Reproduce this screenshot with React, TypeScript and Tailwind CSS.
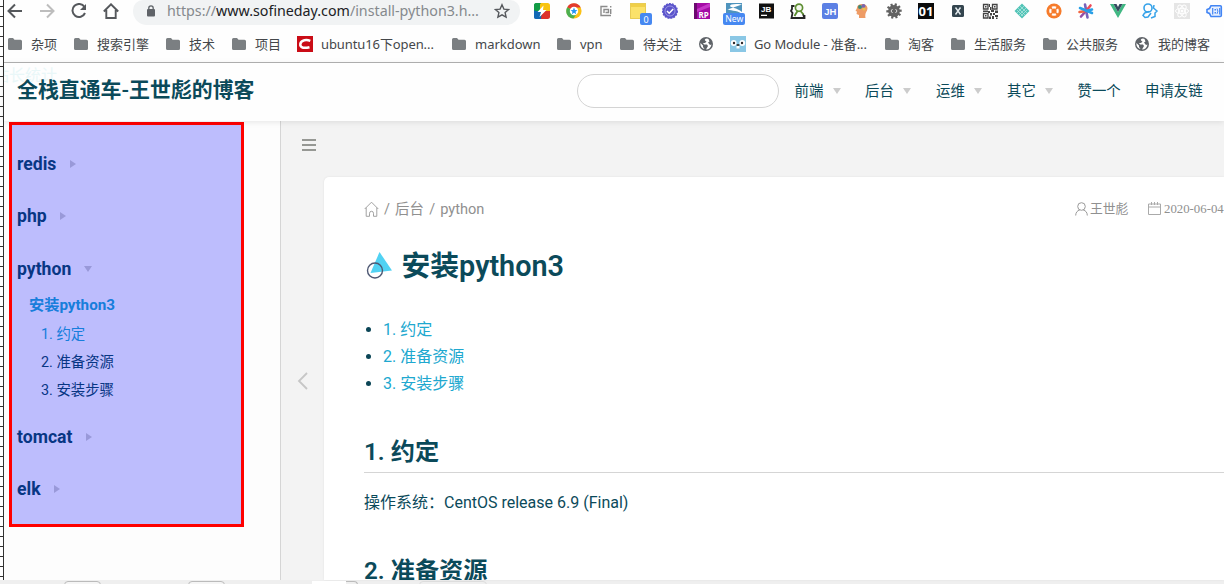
import React from "react";

const teal = "text-[#0b4a5a]";

function Folder() {
  return (
    <svg width="14" height="14" viewBox="0 0 14 14" className="shrink-0">
      <path d="M1.500 1H5l1.500 1.800h6A1.500 1.500 0 0 1 14 4.300v7.200a1.500 1.500 0 0 1-1.500 1.500h-11A1.500 1.500 0 0 1 0 11.500V2.500A1.500 1.500 0 0 1 1.500 1z" fill="#7b7f82" />
    </svg>
  );
}

function Globe() {
  return (
    <svg width="14" height="14" viewBox="0 0 14 14" className="shrink-0">
      <circle cx="7" cy="7" r="7" fill="#5f6368" />
      <path d="M8 1.500c-2 0-2.500 1-2 2l1.500 1L6 6H4l1 1.500h3l1 1.500-2 3.500c3 0 5-2 5.500-5L11 8 9 5.500l1.500-1L9.500 2zM1.500 6l2.500 2.500v1.500l1.500 2C3 11.500 1 9 1.500 6z" fill="#fff" />
    </svg>
  );
}

function CsdnIcon() {
  return (
    <svg width="16" height="16" viewBox="0 0 16 16" className="shrink-0">
      <path d="M0 0h16v16H0z" fill="#ca0c16" />
      <path d="M13.300 4.800C10 3.500 4 3.500 3.300 8c-.5 4.500 5 4.300 9.200 3.200" fill="none" stroke="#fff" strokeWidth="2.500" />
    </svg>
  );
}

function GopherIcon() {
  return (
    <svg width="16" height="16" viewBox="0 0 16 16" className="shrink-0">
      <path d="M0 0h16v16H0z" fill="#8ac7e5" />
      <circle cx="3.700" cy="7" r="2.900" fill="#fff" />
      <circle cx="12.300" cy="7" r="2.900" fill="#fff" />
      <circle cx="4" cy="7" r="1.200" fill="#30292a" />
      <circle cx="12" cy="7" r="1.200" fill="#30292a" />
      <ellipse cx="8" cy="9" rx="1.600" ry="1" fill="#383838" />
      <path d="M6.500 10h3v2.500h-3z" fill="#fff" />
    </svg>
  );
}

const bookmarks: { w: string; icon: React.ReactNode; label?: string; tight?: boolean }[] = [
  { w: "w-[66px]", icon: <Folder />, label: "杂项" },
  { w: "w-[92px]", icon: <Folder />, label: "搜索引擎" },
  { w: "w-[66px]", icon: <Folder />, label: "技术" },
  { w: "w-[65px]", icon: <Folder />, label: "项目" },
  { w: "w-[155px]", icon: <CsdnIcon />, label: "ubuntu16下open...", tight: true },
  { w: "w-[105px]", icon: <Folder />, label: "markdown" },
  { w: "w-[63px]", icon: <Folder />, label: "vpn" },
  { w: "w-[79px]", icon: <Folder />, label: "待关注" },
  { w: "w-[31px]", icon: <Globe /> },
  { w: "w-[155px]", icon: <GopherIcon />, label: "Go Module - 准备...", tight: true },
  { w: "w-[66px]", icon: <Folder />, label: "淘客" },
  { w: "w-[92px]", icon: <Folder />, label: "生活服务" },
  { w: "w-[92px]", icon: <Folder />, label: "公共服务" },
  { w: "w-[89px]", icon: <Globe />, label: "我的博客" },
];

function Ext({ children }: { children: React.ReactNode }) {
  return (
    <svg width="16" height="16" viewBox="0 0 16 16" className="shrink-0 overflow-visible">
      {children}
    </svg>
  );
}

const teeth = [0, 36, 72, 108, 144];

function Extensions() {
  return (
    <div className="flex gap-4">
      <Ext>
        <clipPath id="r"><rect width="16" height="16" rx="2.500" /></clipPath>
        <g clipPath="url(#r)">
          <path d="M0 0h9v8H0z" fill="#119b45" /><path d="M6 0h10v8H6z" fill="#f8c410" />
          <path d="M0 8h8v8H0z" fill="#1268b5" /><path d="M8 8h8v8H7z" fill="#dc3029" />
          <path d="M0 5 5 16H0z" fill="#1268b5" /><path d="M0 0h7L0 8z" fill="#119b45" />
        </g>
        <path d="M9.500 2.500 3.500 9H7l-1.500 5L12.500 7H9z" fill="#fff" />
      </Ext>
      <Ext>
        <circle cx="8" cy="8" r="7.600" fill="#fbc116" />
        <path d="M8 8 1.200 4.200A7.600 7.600 0 0 1 14.800 4.500H8z" fill="#e33b2e" />
        <path d="M8 8 1.200 4.200A7.600 7.600 0 0 0 7.500 15.600L11 10z" fill="#4caf50" />
        <circle cx="8" cy="8" r="4.200" fill="#fff" />
        <path d="m8 4.500 1 2.500 2.500.2-2 1.600.7 2.500L8 9.800l-2.200 1.500.7-2.500-2-1.600L7 7z" fill="#2196f3" />
      </Ext>
      <Ext>
        <path d="M9.500 3.500H3v9h10M6 10V6.500h4.500v3H7.500M12.700 3v1.500M12.700 6v5" fill="none" stroke="#8b8b8b" strokeWidth="1.400" />
      </Ext>
      <Ext>
        <path d="M0 0h16v16H0z" fill="#fbe26a" /><path d="M0 0h16v4H0z" fill="#f0cf48" />
        <path d="M.5 .5h15v15H.5z" fill="none" stroke="#e8cc55" />
        <rect x="10" y="10" width="12" height="12" rx="2" fill="#4688f1" />
        <text x="13.500" y="19.500" fontSize="9" fill="#fff" fontFamily="Noto Sans">0</text>
      </Ext>
      <Ext>
        <circle cx="8" cy="8" r="7.300" fill="#5b54cb" stroke="#5b54cb" strokeDasharray="2 1" strokeWidth="1.400" />
        <circle cx="8" cy="8" r="5" fill="none" stroke="#aaa6e8" strokeWidth=".8" />
        <path d="m5 8 2.200 2.200L11.200 6" fill="none" stroke="#fff" strokeWidth="1.500" />
      </Ext>
      <Ext>
        <path d="M0 0h16v16H0z" fill="#a40ba5" /><path d="M0 0h3v16H0z" fill="#6b096f" /><path d="M3 6 16 0v4L3 9z" fill="#c536c8" />
        <text x="4.500" y="14.500" fontSize="8" fontWeight="700" fill="#fff" fontFamily="Noto Sans">RP</text>
      </Ext>
      <Ext>
        <path d="M0 0h16v12H0z" fill="#4f94bd" /><path d="M16 1.500C8 .500 4 1.500 4 3s7 1.500 12 6v3H0V7z" fill="#fff" />
        <path d="M0 5c4 4 10 1 16 6H0z" fill="#4f94bd" />
        <rect x="-3" y="10" width="22" height="12" rx="2" fill="#4688f1" />
        <text x="-.8" y="19.200" fontSize="8.700" fill="#fff" fontFamily="Noto Sans">New</text>
      </Ext>
      <Ext>
        <path d="M1 .5h15v15H1z" fill="#111" />
        <text x="3" y="9" fontSize="8" fontWeight="700" fill="#fff" fontFamily="Liberation Sans">JB</text>
        <path d="M3 11.700h6v1.300H3z" fill="#fff" />
      </Ext>
      <Ext>
        <path d="M4.500 3H2v3L1 8l1.500 2-1 5H13l1-1-1-3" fill="none" stroke="#252525" strokeWidth="1.800" />
        <path d="M5 15h9.500v-3" fill="none" stroke="#252525" strokeWidth="1.800" />
        <circle cx="9" cy="4.700" r="3.600" fill="#f4f8ee" stroke="#5d8e32" strokeWidth="1.700" /><path d="M7.500 8 4.500 13M10.500 8l3 3.500" stroke="#5d8e32" strokeWidth="1.900" />
      </Ext>
      <Ext>
        <rect width="16" height="16" rx="2" fill="#5c80e4" />
        <text x="2.200" y="11.700" fontSize="9.500" fontWeight="700" fill="#fff" fontFamily="Liberation Sans">JH</text>
      </Ext>
      <Ext>
        <path d="M5 15v-3L2.500 11 3 8.500 1.500 8 3 5C3 0 13-.5 13.500 5c0 4-3 4-2 10z" fill="#ee9c66" />
        <circle cx="6" cy="4" r="2" fill="#398b76" /><circle cx="9.500" cy="3" r="2" fill="#7865b1" /><circle cx="10" cy="6" r="1.500" fill="#e8c347" />
      </Ext>
      <Ext>
        {teeth.map((a) => <path key={a} d="M6.900 .3h2.200v15.400H6.900z" fill="#626262" transform={`rotate(${a + 15} 8 8)`} />)}
        <circle cx="8" cy="8" r="5.900" fill="#626262" /><path d="M6.500 6 5 8l1.500 2M9.500 6 11 8l-1.500 2" fill="none" stroke="#ddd" />
      </Ext>
      <Ext>
        <path d="M0 0h16v16H0z" fill="#0b0b0b" />
        <text x=".5" y="12.500" fontSize="13" fontWeight="700" fill="#fff" fontFamily="Noto Sans">01</text>
      </Ext>
      <Ext>
        <rect x="2" y="2" width="12" height="12" rx="1.500" fill="#34454f" />
        <path d="m5.500 4.500 5 7M10.500 4.500l-5 7" stroke="#e6edf0" strokeWidth="1.400" />
      </Ext>
      <Ext>
        <path d="M1.500 1.500H6V6H1.500zM10.500 1.500H15V6h-4.500zM1.500 10.500H6V15H1.500z" fill="none" stroke="#444" strokeWidth="1.300" />
        <path d="M3 3h1.500v1.500H3zM12 3h1.500v1.500H12zM3 12h1.500v1.500H3zM7 1h1v3H7zM8 4h1.500v3H8zM1 7.500h5v1.500H1zM6 8h2v2H6zM9 7h3v2H9zM13 7.500h3V10h-3zM8 10h2v2.500H8zM11 10h2v2h-2zM13 12h3v2h-3zM10 13h2v3h-2zM7 13.500h2V16H7zM14 14.500h1.500V16H14z" fill="#444" />
      </Ext>
      <Ext>
        <path d="m8 .5 7.500 7.500L8 15.500.5 8z" fill="#51c3b7" />
        <path d="m4 5 7 7M6 3l7 7M3 7l6 6M12 5l-7 7M10 3 3 10M13 7l-6 6" stroke="#b9e9e3" strokeWidth=".7" />
      </Ext>
      <Ext>
        <circle cx="8" cy="8" r="7.600" fill="#f67b2b" />
        <circle cx="8" cy="8" r="3.700" fill="none" stroke="#fff" strokeWidth="2.200" />
        <path d="m4 4 2 2M12 4l-2 2M4 12l2-2M12 12l-2-2" stroke="#f67b2b" strokeWidth="1.800" />
      </Ext>
      <Ext>
        <g strokeWidth="2.600" strokeLinecap="round">
          <path d="M7 1.500 9.500 14.500" stroke="#7862ba" /><path d="m12.500 2.500-4.500 5.500" stroke="#ef4b59" /><path d="m8 8-5 5.500" stroke="#944da7" /><path d="M8 8 1.500 9" stroke="#f16642" /><path d="m8 8 6-1.500M2 5l12 5" stroke="#289fe6" />
        </g>
      </Ext>
      <Ext>
        <path d="M0 1h3.500L8 9l4.500-8H16L8 15z" fill="#41b883" /><path d="M3.500 1h3L8 4l1.500-3h3L8 9z" fill="#35495e" />
      </Ext>
      <Ext>
        <circle cx="6" cy="5" r="4" fill="none" stroke="#36a2e9" strokeWidth="1.600" />
        <path d="M7 8.500 2.500 10l-1.500 2.500 2 2 3-.5 3-4M12 2l-.5 3 3.500 3-2 2v3.500L9 15" fill="none" stroke="#36a2e9" strokeWidth="1.500" />
      </Ext>
      <Ext>
        <path d="M0 0h16v16H0z" fill="#e5e5e5" />
        <g fill="none" stroke="#fff"><ellipse cx="8" cy="8" rx="6.500" ry="2.700" /><ellipse cx="8" cy="8" rx="6.500" ry="2.700" transform="rotate(60 8 8)" /><ellipse cx="8" cy="8" rx="6.500" ry="2.700" transform="rotate(120 8 8)" /></g>
        <circle cx="8" cy="8" r="1.500" fill="#fff" />
      </Ext>
      <Ext>
        <path d="M5 2.700h9.300a1 1 0 0 1 1 1v8.800a1 1 0 0 1-1 1H5L3.500 10.500 1 9.500v-3l2.500-1z" fill="#e8f0fe" stroke="#4285f4" strokeWidth="1.600" />
        <path d="M6.700 5v6.500M13.700 5v6.500" stroke="#4285f4" strokeWidth="1.200" /><path d="M8.500 6H10v1.500H8.500zM8.500 9H10v1.500H8.500z" fill="#4285f4" /><path d="M11 5.500q1.800 2.700 0 5.400" fill="none" stroke="#4285f4" />
      </Ext>
    </div>
  );
}

function BrowserBar() {
  return (
    <div className="relative h-[63px] shrink-0 overflow-hidden border-b border-[#b3b3b3] bg-[#fefefe] font-['Noto_Sans','Noto_Sans_CJK_SC',sans-serif] text-[#44474a]">
      <div className="flex h-[25px] items-start">
        <div className="flex w-[129px] shrink-0 gap-[16px] pl-[3px] pt-[3px]">
          {["#55585c", "#bdbdbd"].map((c, i) => (
            <svg key={c} width="16" height="16" viewBox="0 0 16 16" fill="none" stroke={c} strokeWidth="2">
              <path d={i ? "M1 8h13M8 1.500 14.500 8 8 14.500" : "M15 8H2M8 1.500 1.500 8 8 14.500"} />
            </svg>
          ))}
          <svg width="16" height="16" viewBox="0 0 16 16">
            <path d="M13.500 4A6.500 6.500 0 1 0 14 10" fill="none" stroke="#55585c" strokeWidth="2" /><path d="M15 1v6H9z" fill="#55585c" />
          </svg>
          <svg width="16" height="16" viewBox="0 0 16 16">
            <path d="M.8 8.500 8 1.300l7.200 7.200M3.300 7v8h9.400V7" fill="none" stroke="#55585c" strokeWidth="1.900" />
          </svg>
        </div>
        <div className="flex h-[25px] w-[387px] shrink-0 items-start rounded-b-[14px] rounded-t-[10px] bg-[#f1f3f4] pl-[14px]">
          <svg width="8" height="12" viewBox="0 0 8 12" className="mt-[5px] shrink-0">
            <path d="M1.800 5V3a2.200 2.200 0 0 1 4.400 0v2" fill="none" stroke="#5f6368" strokeWidth="1.300" /><rect y="4" width="8" height="7.500" rx="1" fill="#5f6368" />
          </svg>
          <div className="ml-3 w-[327px] whitespace-nowrap text-[14.260px] leading-[22px] text-[#85898d]">
            https://<span className="text-[#202124]">www.sofineday.com</span>/install-python3.h...
          </div>
          <svg width="16" height="16" viewBox="0 0 16 16" className="mt-[3px] shrink-0">
            <path d="m8 1.800 1.900 4.300 4.700.4-3.500 3.100 1 4.600L8 11.800l-4.100 2.400 1-4.600L1.400 6.500l4.700-.4z" fill="none" stroke="#55585c" strokeWidth="1.400" />
          </svg>
        </div>
        <div className="pl-[14px] pt-[3px]"><Extensions /></div>
      </div>
      <div className="flex h-[38px] items-center pl-1">
        {bookmarks.map((b, i) => (
          <div key={i} className={`flex shrink-0 items-center whitespace-nowrap text-[13px] leading-5 ${b.w}`}>
            <span className="flex w-[23px] shrink-0">{b.icon}</span>
            {b.label && <span className={b.tight ? "pl-px tracking-[-0.1px]" : ""}>{b.label}</span>}
          </div>
        ))}
      </div>
    </div>
  );
}

function Down() {
  return <span className="border-x-4 border-t-[6px] border-x-transparent border-t-[#ccc]" />;
}

function SiteHeader() {
  const items = [
    { t: "前端", w: "w-[70.500px]", sub: true },
    { t: "后台", w: "w-[71px]", sub: true },
    { t: "运维", w: "w-[71px]", sub: true },
    { t: "其它", w: "w-[70.500px]", sub: true },
    { t: "赞一个", w: "w-[67.500px]", sub: false },
    { t: "申请友链", w: "w-[79px]", sub: false },
  ];
  return (
    <header className={`relative z-10 flex h-[58px] shrink-0 items-center bg-[#fefefe] shadow-[0_1px_6px_rgba(0,0,0,0.1)] ${teal}`}>
      <div className="absolute left-0 top-[3px] w-16 overflow-hidden text-[16px] leading-5 text-[#e9f7f8]"><span className="-ml-[11px]">站长统计</span></div>
      <h1 className="relative mb-[3px] ml-[13px] w-[560px] shrink-0 text-[20.900px] font-semibold">全栈直通车-王世彪的博客</h1>
      <div className="mb-0.5 h-[34px] w-[202px] shrink-0 rounded-full border border-[#d4d4d4] bg-white" />
      <nav className="mb-px ml-[15.500px] flex text-[14.4px]">
        {items.map((n) => (
          <div key={n.t} className={`flex shrink-0 items-center gap-[9.500px] whitespace-nowrap ${n.w}`}>
            {n.t}
            {n.sub && <Down />}
          </div>
        ))}
      </nav>
    </header>
  );
}

function Group({ name, open, gap }: { name: string; open?: boolean; gap: string }) {
  return (
    <div className={`flex h-6 items-center text-[17.6px] font-bold leading-6 ${gap}`}>
      {name}
      {open ? (
        <span className="ml-[13px] border-x-4 border-t-[6px] border-x-transparent border-t-[#ccc]" />
      ) : (
        <span className="ml-[13.400px] border-y-4 border-l-[6px] border-y-transparent border-l-[#ccc]" />
      )}
    </div>
  );
}

function Sidebar() {
  return (
    <aside className={`relative w-[277px] shrink-0 border-r border-[#d5d5d5] bg-[#fdfdfd] pl-[13px] ${teal}`}>
      <Group name="redis" gap="mt-[31px]" />
      <Group name="php" gap="mt-[28px]" />
      <Group name="python" open gap="mt-[29px]" />
      <div className="ml-[12px] mt-[12px] text-[15.2px] font-bold leading-6 text-[#20a8cf]">安装python3</div>
      <ul className="ml-6 mt-[4px] text-[14.4px] leading-7">
        <li className="text-[#20a8cf]">1. 约定</li>
        <li>2. 准备资源</li>
        <li>3. 安装步骤</li>
      </ul>
      <Group name="tomcat" gap="mt-[20px]" />
      <Group name="elk" gap="mt-[28px]" />
      <div className="absolute left-[5px] top-px h-[405px] w-[235px] border-[3px] border-[#ff0000] bg-[#0000ff]/25" />
    </aside>
  );
}

function Article() {
  return (
    <main className="flex min-w-0 flex-1 bg-[#f3f3f3]">
      <div className="flex w-[43px] shrink-0 flex-col">
        <div className="ml-[21px] mt-[18px] flex flex-col gap-[3px]">
          <i className="h-0.5 w-[14px] bg-[#969894]" /><i className="h-0.5 w-[14px] bg-[#969894]" /><i className="h-0.5 w-[14px] bg-[#969894]" />
        </div>
        <svg width="11" height="18" viewBox="0 0 11 18" className="ml-[16px] mt-[221px]">
          <path d="M10 1 2 9l8 8" fill="none" stroke="#c6c6c6" strokeWidth="1.800" />
        </svg>
      </div>
      <article className={`mt-[56px] min-w-0 flex-1 overflow-hidden rounded-tl-[5px] bg-white pl-10 shadow-[0_0_2px_#ddd] ${teal}`}>
        <div className="mt-[20px] flex h-6 items-center whitespace-nowrap text-[14.4px] text-[#909090]">
          <svg width="15" height="16" viewBox="0 0 15 16" className="mr-[5px]">
            <path d="M.7 8 7.500 1.200 14.300 8M2.200 6.700v8.600h3.300v-3a2 2 0 0 1 4 0v3h3.300V6.700" fill="none" stroke="#999" strokeWidth=".9" />
          </svg>
          <div className="flex pt-0.5">
            <span className="w-[11px]">/</span><span className="w-[34.200px]">后台</span><span className="w-[11px]">/</span><span className="text-[14.600px]">python</span>
          </div>
          <svg width="13" height="14" viewBox="0 0 13 14" className="ml-auto mr-[2px]">
            <circle cx="6.500" cy="4.500" r="3.800" fill="none" stroke="#999" /><path d="M.7 13.500c0-3 1.600-5 4-5.400M12.300 13.500c0-3-1.600-5-4-5.400" fill="none" stroke="#999" />
          </svg>
          <span className="w-[58px] text-[12.800px]">王世彪</span>
          <svg width="13" height="13" viewBox="0 0 13 13" className="mb-0.5 mr-[3px]">
            <path d="M.5 2h12v10.500H.5zM.5 5h12" fill="none" stroke="#aaa" /><path d="M3.500 0v3M6.500 0v3M9.500 0v3" stroke="#aaa" />
          </svg>
          <span className="w-[60px] pt-px font-['Liberation_Serif',serif] text-[12.800px]">2020-06-04</span>
        </div>
        <h2 className="mt-[24px] flex h-10 items-center text-[28.800px] font-semibold">
          <svg width="37" height="30" viewBox="0 0 37 30" className="shrink-0">
            <path d="M15.500 2 28 20.500 6.500 23z" fill="#51d2f3" /><circle cx="11" cy="20.500" r="7.500" fill="none" stroke="#4e5873" strokeWidth="1.400" />
          </svg>
          <span className="pl-[.5px] pt-1">安装python3</span>
        </h2>
        <ul className="mt-[31px] text-base leading-[27.200px] text-[#20a8cf]">
          {["1. 约定", "2. 准备资源", "3. 安装步骤"].map((t) => (
            <li key={t} className="flex items-center">
              <i className="mb-px ml-0.5 mr-[12px] h-[5px] w-[5px] rounded-full bg-[#0b4556]" />{t}
            </li>
          ))}
        </ul>
        <h3 className="mt-[39px] h-[36px] border-b border-[#d5d5d5] text-[24.200px] font-semibold leading-[30px]">1. 约定</h3>
        <p className="mt-[16px] text-base leading-7">操作系统：CentOS release 6.9 (Final)</p>
        <h3 className="mt-[39px] whitespace-nowrap text-[24.200px] font-semibold leading-[30px]">2. 准备资源</h3>
      </article>
    </main>
  );
}

export default function App() {
  return (
    <div className="flex h-[584px] w-[1224px] flex-col overflow-hidden bg-[#efefef] font-['Roboto','Noto_Sans_CJK_SC',sans-serif]">
      <div className="flex h-[580px] shrink-0">
        <div className="w-1 shrink-0 border-r border-[#333] bg-[repeating-linear-gradient(to_bottom,#fff_0px,#fff_6px,#333_6px,#333_7px,#fff_7px,#fff_10px)]" />
        <div className="flex min-w-0 flex-1 flex-col">
          <BrowserBar />
          <SiteHeader />
          <div className="flex min-h-0 flex-1"><Sidebar /><Article /></div>
        </div>
      </div>
      <div className="flex h-1 overflow-hidden pl-16 pt-px">
        <div className="h-2 w-[37px] shrink-0 rounded border border-[#bbb] bg-[#f5f5f5]" />
        <div className="ml-[87px] h-2 w-[37px] shrink-0 rounded border border-[#bbb] bg-[#f5f5f5]" />
        <div className="ml-[87px] h-2 w-[34px] shrink-0 bg-white" />
        <div className="h-2 w-[12px] shrink-0 rounded-tr border-r border-t border-[#bbb]" />
        <div className="ml-[61px] h-2 w-[68px] shrink-0 rounded border border-[#ddd]" />
      </div>
    </div>
  );
}
